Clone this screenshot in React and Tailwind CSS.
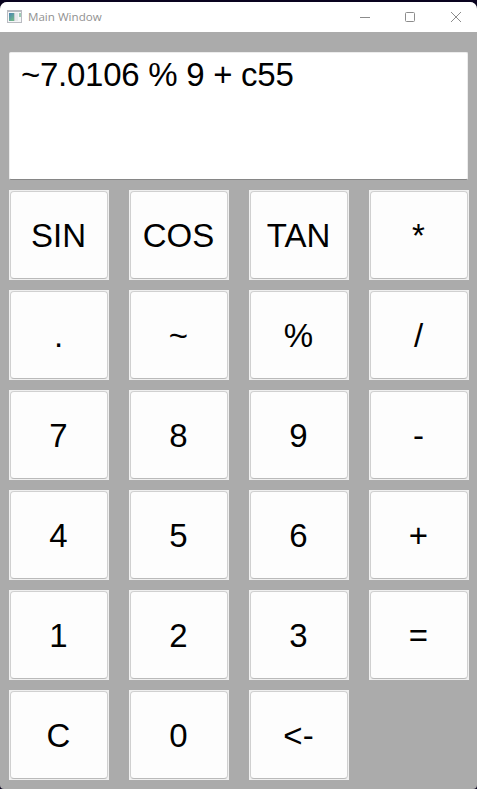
const KEYS = [
  'SIN', 'COS', 'TAN', '*',
  '.', '~', '%', '/',
  '7', '8', '9', '-',
  '4', '5', '6', '+',
  '1', '2', '3', '=',
  'C', '0', '<-',
];

function AppIcon() {
  return (
    <svg className="ml-[7px] h-[14px] w-4" viewBox="0 0 16 14" shapeRendering="crispEdges">
      <defs>
        <linearGradient id="pane" x1="0" y1="0" x2="0.6" y2="1">
          <stop offset="0" stopColor="#4a83b4" />
          <stop offset="1" stopColor="#6fb58b" />
        </linearGradient>
      </defs>
      <path d="M0 0h15v13H0z" fill="#b9bbc1" />
      <path d="M1 2h13v10H1z" fill="#f5f6f7" />
      <path d="M2 3h5v8H2z" fill="url(#pane)" />
      <path d="M7 3h1v8H7z" fill="#c7cbd0" />
      <path d="M8 3h3v8H8z" fill="#e6e8eb" />
      <path d="M12 3h2v4h-2z" fill="#9fcbb5" />
    </svg>
  );
}

function TitleBar() {
  return (
    <header className="flex h-[30px] shrink-0 items-center rounded-t-[7px] bg-white">
      <AppIcon />
      <span className="ml-[5px] w-[90px] whitespace-nowrap font-['Open_Sans',sans-serif] text-[11.6px] leading-4 text-[#919191]">
        Main Window
      </span>
      <svg className="ml-auto mr-[15px] h-3 w-[103px]" viewBox="0 0 103 12" fill="none" stroke="#8c8c8c">
        <path d="M1 6.5h10" />
        <rect x="46.5" y="1.5" width="9" height="9" rx="1" />
        <path d="M92 1l10 10M102 1l-10 10" />
      </svg>
    </header>
  );
}

function Key({ label }) {
  return (
    <button className="flex h-[90px] w-[100px] border border-[#f0f0f0] bg-[#f0f0f0]">
      <span className="flex h-full w-full items-center justify-center rounded-[4px] border border-[#d0d0d0] border-b-[#bababa] bg-[#fdfdfd] pr-px pt-[2px] text-[33px] leading-[38px]">
        {label}
      </span>
    </button>
  );
}

export default function App() {
  return (
    <div className="h-[789px] w-[477px] overflow-hidden bg-[#09031f] pt-[2px] font-['Liberation_Sans',Arial,sans-serif] text-black">
      <div className="flex h-[787px] flex-col rounded-t-[7px] rounded-b-[4px] bg-[#ababab]">
        <TitleBar />
        <main className="px-[9px] pt-5">
          <div className="h-32 w-[459px] rounded-[2px] border border-[#ececec] border-b-[#868686] bg-white pl-[11px] pt-[3px] text-[33px] leading-[38px] tracking-[-0.27px]">
            ~7.0106 % 9 + c55
          </div>
          <div className="mt-[10px] grid w-[460px] grid-cols-4 gap-x-5 gap-y-[10px]">
            {KEYS.map((label) => (
              <Key key={label} label={label} />
            ))}
          </div>
        </main>
      </div>
    </div>
  );
}
